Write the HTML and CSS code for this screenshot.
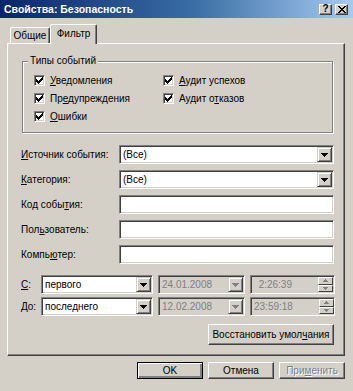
FILE: index.html
```html
<!DOCTYPE html>
<html lang="ru">
  <head>
    <meta charset="UTF-8" />
    <title>Свойства: Безопасность</title>
    <link rel="stylesheet" href="styles.css">
  </head>
  <body>
    <div class="dialog">
      <div class="titlebar">
        <span class="title">Свойства: Безопасность</span>
        <span class="cbtn help">?</span>
        <span class="cbtn close">
          <svg width="8" height="7" viewBox="0 0 8 7" shape-rendering="crispEdges"><path d="M0 0h2v1h-2z M6 0h2v1h-2z M1 1h2v1h-2z M5 1h2v1h-2z M2 2h4v1h-4z M3 3h2v1h-2z M2 4h4v1h-4z M1 5h2v1h-2z M5 5h2v1h-2z M0 6h2v1h-2z M6 6h2v1h-2z" fill="#000"/></svg>
        </span>
      </div>

      <div class="client">
        <div class="tabs">
          <div class="tab">Общие</div>
          <div class="tab active">Фильтр</div>
        </div>

        <div class="panel">
          <div class="group">
            <span class="legend">Типы событий</span>
            <div class="checks">
              <div class="check"><span class="box"><svg width="7" height="7" viewBox="0 0 7 7" shape-rendering="crispEdges"><path class="tick" d="M6 0h1v1h-1z M5 1h2v1h-2z M0 2h1v1h-1z M4 2h3v1h-3z M0 3h2v1h-2z M3 3h3v1h-3z M0 4h5v1h-5z M1 5h3v1h-3z M2 6h1v1h-1z"/></svg></span><span><u>У</u>ведомления</span></div>
              <div class="check"><span class="box"><svg width="7" height="7" viewBox="0 0 7 7" shape-rendering="crispEdges"><path class="tick" d="M6 0h1v1h-1z M5 1h2v1h-2z M0 2h1v1h-1z M4 2h3v1h-3z M0 3h2v1h-2z M3 3h3v1h-3z M0 4h5v1h-5z M1 5h3v1h-3z M2 6h1v1h-1z"/></svg></span><span><u>А</u>удит успехов</span></div>
              <div class="check"><span class="box"><svg width="7" height="7" viewBox="0 0 7 7" shape-rendering="crispEdges"><path class="tick" d="M6 0h1v1h-1z M5 1h2v1h-2z M0 2h1v1h-1z M4 2h3v1h-3z M0 3h2v1h-2z M3 3h3v1h-3z M0 4h5v1h-5z M1 5h3v1h-3z M2 6h1v1h-1z"/></svg></span><span>Пр<u>е</u>дупреждения</span></div>
              <div class="check"><span class="box"><svg width="7" height="7" viewBox="0 0 7 7" shape-rendering="crispEdges"><path class="tick" d="M6 0h1v1h-1z M5 1h2v1h-2z M0 2h1v1h-1z M4 2h3v1h-3z M0 3h2v1h-2z M3 3h3v1h-3z M0 4h5v1h-5z M1 5h3v1h-3z M2 6h1v1h-1z"/></svg></span><span>Аудит о<u>т</u>казов</span></div>
              <div class="check"><span class="box"><svg width="7" height="7" viewBox="0 0 7 7" shape-rendering="crispEdges"><path class="tick" d="M6 0h1v1h-1z M5 1h2v1h-2z M0 2h1v1h-1z M4 2h3v1h-3z M0 3h2v1h-2z M3 3h3v1h-3z M0 4h5v1h-5z M1 5h3v1h-3z M2 6h1v1h-1z"/></svg></span><span><u>О</u>шибки</span></div>
            </div>
          </div>

          <div class="fields">
            <span class="lbl"><u>И</u>сточник события:</span>
            <div class="combo sunken">
              <span class="val">(Все)</span>
              <span class="drop"><svg width="7" height="4" viewBox="0 0 7 4" shape-rendering="crispEdges"><path d="M0 0h7v1h-7z M1 1h5v1h-5z M2 2h3v1h-3z M3 3h1v1h-1z"/></svg></span>
            </div>
            <span class="lbl"><u>К</u>атегория:</span>
            <div class="combo sunken">
              <span class="val">(Все)</span>
              <span class="drop"><svg width="7" height="4" viewBox="0 0 7 4" shape-rendering="crispEdges"><path d="M0 0h7v1h-7z M1 1h5v1h-5z M2 2h3v1h-3z M3 3h1v1h-1z"/></svg></span>
            </div>
            <span class="lbl">Код собы<u>т</u>ия:</span>
            <div class="edit sunken"></div>
            <span class="lbl">Пол<u>ь</u>зователь:</span>
            <div class="edit sunken"></div>
            <span class="lbl">Компь<u>ю</u>тер:</span>
            <div class="edit sunken"></div>
          </div>

          <div class="dates">
            <div class="date-row">
              <span class="lbl short"><u>С</u>:</span>
              <div class="combo sunken from">
                <span class="val">первого</span>
                <span class="drop"><svg width="7" height="4" viewBox="0 0 7 4" shape-rendering="crispEdges"><path d="M0 0h7v1h-7z M1 1h5v1h-5z M2 2h3v1h-3z M3 3h1v1h-1z"/></svg></span>
              </div>
              <div class="combo sunken date disabled">
                <span class="val">24.01.2008</span>
                <span class="drop"><svg width="7" height="4" viewBox="0 0 7 4" shape-rendering="crispEdges"><path d="M0 0h7v1h-7z M1 1h5v1h-5z M2 2h3v1h-3z M3 3h1v1h-1z"/></svg></span>
              </div>
              <div class="spin sunken disabled">
                <span class="val">2:26:39</span>
                <span class="arrows">
                  <span class="step"><svg width="5" height="3" viewBox="0 0 5 3" shape-rendering="crispEdges"><path d="M2 0h1v1h-1z M1 1h3v1h-3z M0 2h5v1h-5z"/></svg></span>
                  <span class="step"><svg width="5" height="3" viewBox="0 0 5 3" shape-rendering="crispEdges"><path d="M0 0h5v1h-5z M1 1h3v1h-3z M2 2h1v1h-1z"/></svg></span>
                </span>
              </div>
            </div>
            <div class="date-row">
              <span class="lbl short"><u>Д</u>о:</span>
              <div class="combo sunken from">
                <span class="val">последнего</span>
                <span class="drop"><svg width="7" height="4" viewBox="0 0 7 4" shape-rendering="crispEdges"><path d="M0 0h7v1h-7z M1 1h5v1h-5z M2 2h3v1h-3z M3 3h1v1h-1z"/></svg></span>
              </div>
              <div class="combo sunken date disabled">
                <span class="val">12.02.2008</span>
                <span class="drop"><svg width="7" height="4" viewBox="0 0 7 4" shape-rendering="crispEdges"><path d="M0 0h7v1h-7z M1 1h5v1h-5z M2 2h3v1h-3z M3 3h1v1h-1z"/></svg></span>
              </div>
              <div class="spin sunken disabled">
                <span class="val">23:59:18</span>
                <span class="arrows">
                  <span class="step"><svg width="5" height="3" viewBox="0 0 5 3" shape-rendering="crispEdges"><path d="M2 0h1v1h-1z M1 1h3v1h-3z M0 2h5v1h-5z"/></svg></span>
                  <span class="step"><svg width="5" height="3" viewBox="0 0 5 3" shape-rendering="crispEdges"><path d="M0 0h5v1h-5z M1 1h3v1h-3z M2 2h1v1h-1z"/></svg></span>
                </span>
              </div>
            </div>
          </div>

          <div class="restore">
            <span class="btn wide">Восстановить умол<u>ч</u>ания</span>
          </div>
        </div>

        <div class="footer">
          <span class="btn default">OK</span>
          <span class="btn">Отмена</span>
          <span class="btn disabled">При<u>м</u>енить</span>
        </div>
      </div>
    </div>
  </body>
</html>
```

FILE: styles.css
```css
* {
  box-sizing: border-box;
}
body {
  margin: 0;
  font-family: "Liberation Sans", Arial, sans-serif;
  font-size: 10px;
  color: #000;
  background: #d4d0c8;
}
u {
  text-decoration: underline;
  text-underline-offset: 1px;
}
.dialog {
  width: 353px;
  height: 391px;
  background: #d4d0c8;
  overflow: hidden;
}

/* title bar */
.titlebar {
  height: 18px;
  display: flex;
  align-items: center;
  gap: 3px;
  padding: 0 5px 0 4px;
  background: linear-gradient(to right, #0a246a, #3a6ea5 55%, #a6caf0);
}
.title {
  flex: 1;
  color: #fff;
  font-weight: bold;
  font-size: 10.5px;
}
.cbtn {
  width: 13px;
  height: 11px;
  display: flex;
  align-items: center;
  justify-content: center;
  background: #d4d0c8;
  border: 1px solid;
  border-color: #fff #404040 #404040 #fff;
  box-shadow: inset -1px -1px 0 #808080;
  font-weight: bold;
  font-size: 10px;
  line-height: 1;
}

/* tabs */
.client {
  padding: 6px 8px 0 7px;
}
.tabs {
  display: flex;
  align-items: flex-end;
  height: 20px;
  margin-bottom: -1px;
  padding-left: 3px;
}
.tab {
  height: 16px;
  margin-bottom: 1px;
  width: 40px;
  display: flex;
  align-items: center;
  justify-content: center;
  border: 1px solid;
  border-bottom: none;
  border-color: #fff #404040 transparent #fff;
  box-shadow: inset -1px 0 0 #808080;
  border-radius: 2px 2px 0 0;
}
.tab.active {
  position: relative;
  z-index: 1;
  width: 47px;
  height: 20px;
  margin-bottom: 0;
  padding-bottom: 2px;
  background: #d4d0c8;
}
.panel {
  height: 313px;
  border: 1px solid;
  border-color: #fff #404040 #404040 #fff;
  box-shadow: inset -1px -1px 0 #808080;
  padding: 17px 0 0 13px;
}

/* group box */
.group {
  position: relative;
  width: 311px;
  height: 72px;
  margin-left: 1px;
  border: 1px solid #808080;
  box-shadow: inset 1px 1px 0 #fff, 1px 1px 0 #fff;
  padding: 9px 0 0 11px;
}
.legend {
  position: absolute;
  left: 5px;
  top: -7px;
  padding: 0 2px;
  background: #d4d0c8;
}
.checks {
  display: grid;
  grid-template-columns: 129px auto;
  grid-auto-rows: 18px;
}
.check {
  display: flex;
  align-items: center;
  gap: 5px;
}
.box {
  width: 11px;
  height: 11px;
  display: flex;
  align-items: center;
  justify-content: center;
  background: #fff;
  border: 1px solid;
  border-color: #808080 #fff #fff #808080;
  box-shadow: inset 1px 1px 0 #404040, inset -1px -1px 0 #d4d0c8;
}
.tick {
  fill: #000;
}

/* fields */
.sunken {
  border: 1px solid;
  border-color: #808080 #fff #fff #808080;
  box-shadow: inset 1px 1px 0 #404040, inset -1px -1px 0 #d4d0c8;
  padding: 1px;
  background: #fff;
}
.fields {
  display: grid;
  grid-template-columns: 98px 215px;
  grid-auto-rows: 19px;
  row-gap: 6px;
  margin-top: 12px;
}
.lbl {
  display: flex;
  align-items: center;
}
.combo,
.spin {
  display: flex;
  align-items: center;
}
.val {
  flex: 1;
  padding-left: 2px;
  white-space: nowrap;
}
.drop {
  width: 15px;
  height: 15px;
  display: flex;
  align-items: center;
  justify-content: center;
  background: #d4d0c8;
  border: 1px solid;
  border-color: #d4d0c8 #404040 #404040 #d4d0c8;
  box-shadow: inset 1px 1px 0 #fff, inset -1px -1px 0 #808080;
}
.drop path {
  fill: #000;
}

/* date range */
.dates {
  margin-top: 11px;
  display: flex;
  flex-direction: column;
  gap: 3px;
}
.date-row {
  display: flex;
  height: 19px;
  gap: 5px;
}
.lbl.short {
  width: 15px;
  white-space: nowrap;
}
.from {
  width: 112px;
}
.date {
  width: 87px;
}
.spin {
  width: 85px;
}
.disabled.sunken {
  background: #d4d0c8;
  color: #808080;
}
.disabled .drop path,
.disabled .step path {
  fill: #808080;
}
.spin .val {
  text-align: right;
  padding-right: 26px;
}
.arrows {
  display: flex;
  flex-direction: column;
  height: 15px;
}
.step {
  width: 15px;
  height: 7.5px;
  display: flex;
  align-items: center;
  justify-content: center;
  border: 1px solid;
  border-color: #fff #404040 #404040 #fff;
}

/* buttons */
.restore {
  width: 313px;
  margin-top: 8px;
  display: flex;
  justify-content: flex-end;
}
.btn {
  height: 17px;
  width: 66px;
  display: flex;
  align-items: center;
  justify-content: center;
  border: 1px solid;
  border-color: #fff #404040 #404040 #fff;
  box-shadow: inset -1px -1px 0 #808080;
  white-space: nowrap;
}
.btn.wide {
  width: 126px;
  height: 21px;
}
.btn.default {
  border-color: #000;
  box-shadow: inset 1px 1px 0 #fff, inset -2px -2px 0 #808080;
}
.btn.disabled {
  color: #808080;
  text-shadow: 1px 1px 0 #fff;
}
.footer {
  display: flex;
  justify-content: flex-end;
  gap: 5px;
  margin-top: 6px;
}
```
